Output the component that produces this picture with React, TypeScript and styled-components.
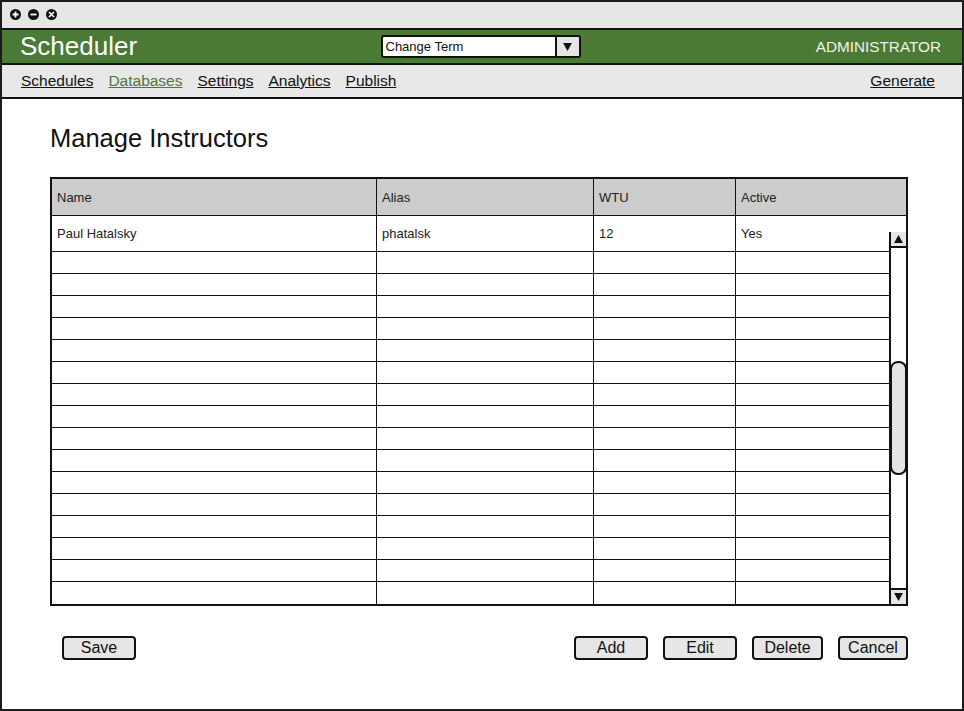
import React from "react";
import styled, { createGlobalStyle } from "styled-components";

const GlobalStyle = createGlobalStyle`
  html, body {
    margin: 0;
    padding: 0;
    background: #fff;
  }
  body {
    font-family: "Liberation Sans", Arial, sans-serif;
    color: #111;
  }
  * {
    box-sizing: border-box;
  }
`;

const columns = ["Name", "Alias", "WTU", "Active"];
const rows: string[][] = [["Paul Hatalsky", "phatalsk", "12", "Yes"]];
for (let i = 0; i < 16; i++) rows.push(["", "", "", ""]);

const Window = styled.div`
  width: 964px;
  height: 711px;
  border: 2px solid #1c1c1c;
  display: flex;
  flex-direction: column;
  background: #fff;
`;

const TitleBar = styled.div`
  height: 28px;
  background: #e6e6e6;
  border-bottom: 2px solid #111;
  display: flex;
  align-items: center;
  gap: 7px;
  padding: 0 0 2px 8px;
`;

const WinButton = styled.span`
  width: 11px;
  height: 11px;
  border-radius: 50%;
  background: #111;
  display: flex;
  align-items: center;
  justify-content: center;
`;

const Header = styled.div`
  height: 35px;
  background: #4a7a35;
  border-bottom: 2px solid #111;
  display: grid;
  grid-template-columns: 1fr auto 1fr;
  align-items: center;
  padding: 0 21px 0 18px;
`;

const AppTitle = styled.div`
  color: #fff;
  font-size: 26px;
`;

const Role = styled.div`
  justify-self: end;
  color: #eef2ea;
  font-size: 15.3px;
`;

const Select = styled.div`
  width: 200px;
  height: 23px;
  border: 2px solid #111;
  border-radius: 3px;
  background: #fff;
  display: flex;
  align-items: stretch;
  overflow: hidden;
`;

const SelectText = styled.div`
  flex: 1;
  font-size: 13px;
  padding-left: 3px;
  display: flex;
  align-items: center;
`;

const SelectArrow = styled.div`
  width: 24px;
  border-left: 2px solid #111;
  background: #e6e6e6;
  display: flex;
  align-items: center;
  justify-content: center;
`;

const Nav = styled.div`
  height: 34px;
  background: #e8e8e8;
  border-bottom: 2px solid #111;
  display: flex;
  align-items: center;
  padding: 0 27px 0 19px;
`;

const NavLink = styled.a<{ $active?: boolean; $end?: boolean }>`
  font-size: 15.5px;
  color: ${(p) => (p.$active ? "#4a7a35" : "#111")};
  text-decoration: underline;
  margin-right: ${(p) => (p.$end ? "0" : "15px")};
  cursor: pointer;
`;

const Spacer = styled.div`
  flex: 1;
`;

const Content = styled.div`
  flex: 1;
  padding: 24px 54px 0 48px;
  display: flex;
  flex-direction: column;
`;

const PageTitle = styled.h1`
  margin: 0 0 24px 0;
  font-size: 25.5px;
  font-weight: normal;
  color: #111;
  line-height: 30px;
`;

const TableFrame = styled.div`
  position: relative;
  border: 2px solid #111;
  height: 429px;
  width: 858px;
  overflow: hidden;
`;

const Grid = styled.div`
  display: grid;
  height: 100%;
  grid-template-columns: 325px 217px 142px 1fr;
  grid-template-rows: 37px 36px repeat(15, 22px) 1fr;
`;

const HeadCell = styled.div<{ $last?: boolean }>`
  background: #cccccc;
  border-bottom: 1px solid #111;
  border-right: ${(p) => (p.$last ? "none" : "1px solid #111")};
  font-size: 13px;
  color: #222;
  padding-left: 5px;
  display: flex;
  align-items: center;
`;

const Cell = styled.div<{ $last?: boolean; $bottom?: boolean }>`
  border-bottom: ${(p) => (p.$bottom ? "none" : "1px solid #111")};
  border-right: ${(p) => (p.$last ? "none" : "1px solid #111")};
  font-size: 13px;
  color: #222;
  padding-left: 5px;
  display: flex;
  align-items: center;
`;

const Scrollbar = styled.div`
  position: absolute;
  right: 0;
  top: 53px;
  bottom: 0;
  width: 17px;
  background: #fff;
  border-left: 2px solid #111;
  display: flex;
  flex-direction: column;
`;

const ScrollArrow = styled.div<{ $down?: boolean }>`
  height: 16px;
  background: #e6e6e6;
  border-top: ${(p) => (p.$down ? "2px solid #111" : "none")};
  border-bottom: ${(p) => (p.$down ? "none" : "2px solid #111")};
  display: flex;
  align-items: center;
  justify-content: center;
`;

const ScrollTrack = styled.div`
  flex: 1;
  padding-top: 113px;
`;

const Thumb = styled.div`
  height: 114px;
  margin-left: -1px;
  width: 17px;
  background: #e4e4e4;
  border: 2px solid #111;
  border-radius: 8px;
`;

const Actions = styled.div`
  display: flex;
  align-items: center;
  margin-top: 30px;
  padding-left: 12px;
  gap: 15px;
`;

const Button = styled.button<{ $w: number }>`
  width: ${(p) => p.$w}px;
  height: 24px;
  background: #e6e6e6;
  border: 2px solid #111;
  border-radius: 4px;
  font-family: "Liberation Sans", Arial, sans-serif;
  font-size: 16px;
  color: #111;
  padding: 0;
  display: flex;
  align-items: center;
  justify-content: center;
`;

const Triangle = ({ up, size = 9 }: { up?: boolean; size?: number }) => (
  <svg width={size} height={size - 1} viewBox="0 0 10 9">
    <path d={up ? "M0 9L5 0L10 9Z" : "M0 0L10 0L5 9Z"} fill="#111" />
  </svg>
);

const Glyph = ({ kind }: { kind: "plus" | "minus" | "close" }) => (
  <svg width="7" height="7" viewBox="0 0 7 7">
    {kind === "plus" && (
      <path d="M3.5 0.5V6.5M0.5 3.5H6.5" stroke="#fff" strokeWidth="1.8" />
    )}
    {kind === "minus" && <path d="M0.5 3.5H6.5" stroke="#fff" strokeWidth="1.8" />}
    {kind === "close" && (
      <path d="M1 1L6 6M6 1L1 6" stroke="#fff" strokeWidth="1.6" />
    )}
  </svg>
);

export default function App() {
  return (
    <>
      <GlobalStyle />
      <Window>
        <TitleBar>
          <WinButton>
            <Glyph kind="plus" />
          </WinButton>
          <WinButton>
            <Glyph kind="minus" />
          </WinButton>
          <WinButton>
            <Glyph kind="close" />
          </WinButton>
        </TitleBar>
        <Header>
          <AppTitle>Scheduler</AppTitle>
          <Select>
            <SelectText>Change Term</SelectText>
            <SelectArrow>
              <Triangle size={9} />
            </SelectArrow>
          </Select>
          <Role>ADMINISTRATOR</Role>
        </Header>
        <Nav>
          <NavLink>Schedules</NavLink>
          <NavLink $active>Databases</NavLink>
          <NavLink>Settings</NavLink>
          <NavLink>Analytics</NavLink>
          <NavLink>Publish</NavLink>
          <Spacer />
          <NavLink $end>Generate</NavLink>
        </Nav>
        <Content>
          <PageTitle>Manage Instructors</PageTitle>
          <TableFrame>
            <Grid>
              {columns.map((c, i) => (
                <HeadCell key={c} $last={i === columns.length - 1}>
                  {c}
                </HeadCell>
              ))}
              {rows.map((r, ri) =>
                r.map((v, ci) => (
                  <Cell
                    key={`${ri}-${ci}`}
                    $last={ci === 3}
                    $bottom={ri === rows.length - 1}
                  >
                    {v}
                  </Cell>
                ))
              )}
            </Grid>
            <Scrollbar>
              <ScrollArrow>
                <Triangle up />
              </ScrollArrow>
              <ScrollTrack>
                <Thumb />
              </ScrollTrack>
              <ScrollArrow $down>
                <Triangle />
              </ScrollArrow>
            </Scrollbar>
          </TableFrame>
          <Actions>
            <Button $w={74}>Save</Button>
            <Spacer />
            <Button $w={74}>Add</Button>
            <Button $w={74}>Edit</Button>
            <Button $w={71}>Delete</Button>
            <Button $w={70}>Cancel</Button>
          </Actions>
        </Content>
      </Window>
    </>
  );
}
